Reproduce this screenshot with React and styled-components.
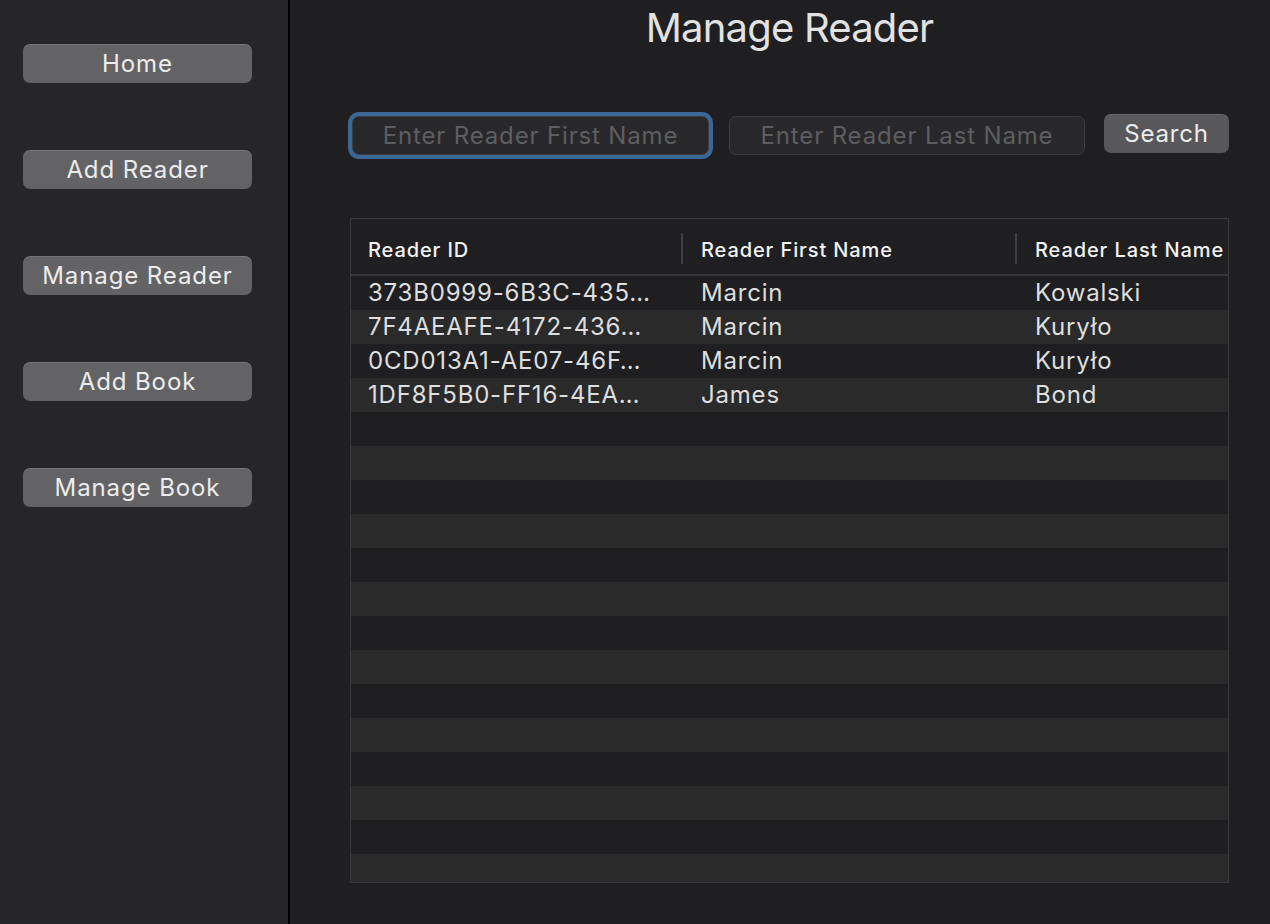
import React from "react";
import styled, { createGlobalStyle } from "styled-components";

const GlobalStyle = createGlobalStyle`
  html, body {
    margin: 0;
    padding: 0;
    background: #1f1f21;
  }
  body {
    font-family: Inter, "Noto Sans", "Liberation Sans", sans-serif;
    letter-spacing: 0.8px;
  }
  * {
    box-sizing: border-box;
  }
`;

const Window = styled.div`
  display: flex;
  width: 1270px;
  height: 924px;
  overflow: hidden;
  background: #1f1f21;
`;

const Sidebar = styled.nav`
  width: 290px;
  flex-shrink: 0;
  background: #262628;
  border-right: 2px solid #000000;
  display: flex;
  flex-direction: column;
  gap: 67px;
  padding: 44px 0 0 23px;
`;

const NavButton = styled.button`
  width: 229px;
  height: 39px;
  border: none;
  border-radius: 7px;
  background: #636366;
  box-shadow: inset 0 1px 0 rgba(255, 255, 255, 0.12);
  color: #ececec;
  font-family: inherit;
  letter-spacing: 0.9px;
  font-size: 24px;
  line-height: 39px;
  padding: 0;
  cursor: pointer;
`;

const Main = styled.main`
  flex: 1;
  display: flex;
  flex-direction: column;
  padding-left: 60px;
`;

const Content = styled.div`
  width: 879px;
  display: flex;
  flex-direction: column;
`;

const Title = styled.h1`
  margin: 4px 0 0;
  text-align: center;
  font-size: 40px;
  line-height: 48px;
  font-weight: 400;
  letter-spacing: -0.8px;
  color: #e2e2e2;
`;

const SearchRow = styled.div`
  display: flex;
  align-items: flex-start;
  margin-top: 62px;
  padding-left: 2px;
  height: 41px;
`;

const TextInput = styled.input`
  width: ${(p) => p.$width}px;
  height: 39px;
  margin-top: 2px;
  margin-right: ${(p) => p.$gap}px;
  border-radius: 7px;
  border: 1px solid #3e3e40;
  background: #28282a;
  color: #e0e0e0;
  font-family: inherit;
  letter-spacing: 0.85px;
  font-size: 24px;
  text-align: center;
  outline: none;
  box-shadow: ${(p) => (p.$focused ? "0 0 0 4px #3a6796" : "none")};

  &::placeholder {
    color: #5e5e60;
  }
`;

const SearchButton = styled.button`
  width: 125px;
  height: 39px;
  border: none;
  border-radius: 7px;
  background: #58585b;
  box-shadow: inset 0 1px 0 rgba(255, 255, 255, 0.1);
  color: #ececec;
  font-family: inherit;
  letter-spacing: 0.8px;
  font-size: 24px;
  padding: 0;
`;

const Table = styled.div`
  margin-top: 63px;
  width: 879px;
  height: 665px;
  border: 1px solid #3a3a3c;
  overflow: hidden;
  background: #1f1f21;
`;

const HeaderRow = styled.div`
  display: grid;
  grid-template-columns: 330px 334px 1fr;
  height: 57px;
  border-bottom: 2px solid #38383a;
  align-items: center;
`;

const HeaderCell = styled.div`
  position: relative;
  padding-left: ${(p) => (p.$first ? 17 : 20)}px;
  font-size: 20px;
  font-weight: 500;
  letter-spacing: 0.9px;
  color: #f2f2f2;
  white-space: nowrap;
  line-height: 55px;
  padding-top: 4px;

  &::before {
    content: "";
    display: ${(p) => (p.$first ? "none" : "block")};
    position: absolute;
    left: 0;
    top: 14px;
    width: 2px;
    height: 31px;
    background: #3e3e40;
  }
`;

const Row = styled.div`
  display: grid;
  grid-template-columns: 330px 334px 1fr;
  height: 34px;
  align-items: center;
  background: ${(p) => (p.$odd ? "#2a2a2b" : "#1f1f21")};
`;

const Cell = styled.div`
  padding-left: ${(p) => (p.$first ? 17 : 20)}px;
  font-size: 24px;
  color: #dedede;
  white-space: nowrap;
  overflow: hidden;
  text-overflow: ellipsis;
  line-height: 34px;
`;

const navItems = ["Home", "Add Reader", "Manage Reader", "Add Book", "Manage Book"];

const readers = [
  ["373B0999-6B3C-435…", "Marcin", "Kowalski"],
  ["7F4AEAFE-4172-436…", "Marcin", "Kuryło"],
  ["0CD013A1-AE07-46F…", "Marcin", "Kuryło"],
  ["1DF8F5B0-FF16-4EA…", "James", "Bond"],
];

const TOTAL_ROWS = 18;

export default function App() {
  const rows = Array.from({ length: TOTAL_ROWS }, (_, i) => readers[i] || ["", "", ""]);

  return (
    <>
      <GlobalStyle />
      <Window>
        <Sidebar>
          {navItems.map((item) => (
            <NavButton key={item}>{item}</NavButton>
          ))}
        </Sidebar>
        <Main>
          <Content>
            <Title>Manage Reader</Title>
            <SearchRow>
              <TextInput $width={357} $gap={20} $focused placeholder="Enter Reader First Name" />
              <TextInput $width={356} $gap={19} placeholder="Enter Reader Last Name" />
              <SearchButton>Search</SearchButton>
            </SearchRow>
            <Table>
              <HeaderRow>
                <HeaderCell $first>Reader ID</HeaderCell>
                <HeaderCell>Reader First Name</HeaderCell>
                <HeaderCell>Reader Last Name</HeaderCell>
              </HeaderRow>
              {rows.map((r, i) => (
                <Row key={i} $odd={i % 2 === 1}>
                  <Cell $first>{r[0]}</Cell>
                  <Cell>{r[1]}</Cell>
                  <Cell>{r[2]}</Cell>
                </Row>
              ))}
            </Table>
          </Content>
        </Main>
      </Window>
    </>
  );
}
